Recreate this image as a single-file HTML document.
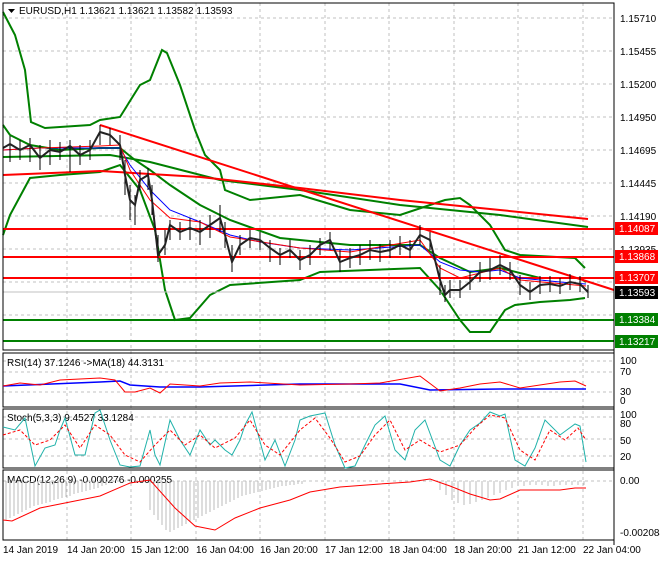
<!DOCTYPE html>
<html><head><meta charset="utf-8"><style>
body{margin:0;background:#fff;width:660px;height:560px;overflow:hidden;font-family:"Liberation Sans",sans-serif}
svg text{font-family:"Liberation Sans",sans-serif;font-size:10px}
</style></head><body>
<svg width="660" height="560" viewBox="0 0 660 560" xmlns="http://www.w3.org/2000/svg">
<rect width="660" height="560" fill="#fff"/>
<g stroke="#c0c0c0" stroke-dasharray="3,3" stroke-width="1">
<line x1="67" y1="3" x2="67" y2="540"/><line x1="131" y1="3" x2="131" y2="540"/><line x1="196" y1="3" x2="196" y2="540"/><line x1="260" y1="3" x2="260" y2="540"/><line x1="325" y1="3" x2="325" y2="540"/><line x1="389" y1="3" x2="389" y2="540"/><line x1="454" y1="3" x2="454" y2="540"/><line x1="518" y1="3" x2="518" y2="540"/><line x1="583" y1="3" x2="583" y2="540"/>
<line x1="3" y1="18" x2="614" y2="18"/><line x1="3" y1="51" x2="614" y2="51"/><line x1="3" y1="84" x2="614" y2="84"/><line x1="3" y1="117" x2="614" y2="117"/><line x1="3" y1="150" x2="614" y2="150"/><line x1="3" y1="183" x2="614" y2="183"/><line x1="3" y1="216" x2="614" y2="216"/><line x1="3" y1="249" x2="614" y2="249"/><line x1="3" y1="282" x2="614" y2="282"/><line x1="3" y1="315" x2="614" y2="315"/>
<line x1="3" y1="361" x2="614" y2="361"/><line x1="3" y1="372" x2="614" y2="372"/><line x1="3" y1="392" x2="614" y2="392"/>
<line x1="3" y1="417" x2="614" y2="417"/><line x1="3" y1="439" x2="614" y2="439"/><line x1="3" y1="456" x2="614" y2="456"/>
<line x1="3" y1="481" x2="614" y2="481"/>
</g>
<g fill="none" stroke-width="2">
<polyline stroke="#008000" points="3,12 15,35 25,70 31,122 45,128 90,125 100,120 120,117 140,85 150,80 162,50 167,53 180,85 195,130 205,155 220,170 225,190 250,200 300,195 350,210 400,215 430,205 445,200 460,198 470,205 490,225 505,250 520,255 575,258 585,268"/>
<polyline stroke="#008000" points="3,125 10,135 30,145 60,150 100,148 120,148 135,160 150,170 170,185 200,205 230,220 280,238 350,245 420,245 440,258 470,272 500,268 540,278 580,278 586,282"/>
<polyline stroke="#008000" points="3,235 10,215 30,178 60,175 100,172 120,165 140,190 155,230 165,290 175,320 190,318 210,295 230,285 300,280 320,272 420,268 440,290 460,320 470,332 490,332 505,310 515,305 540,302 570,300 585,298"/>
<polyline stroke="#008000" points="3,157 110,155 150,162 220,180 300,190 400,205 500,215 588,227"/>
<polyline stroke="#ff0000" points="3,175 100,171 200,177 300,188 400,200 500,210 588,219"/>
<line stroke="#ff0000" x1="100" y1="125" x2="614" y2="290"/>
<line stroke="#ff0000" x1="3" y1="229" x2="614" y2="229"/>
<line stroke="#ff0000" x1="3" y1="257" x2="614" y2="257"/>
<line stroke="#ff0000" x1="3" y1="278" x2="614" y2="278"/>
<line stroke="#008000" x1="3" y1="320" x2="614" y2="320"/>
<line stroke="#008000" x1="3" y1="341" x2="614" y2="341"/>
</g>
<line stroke="#c0c0c0" x1="3" y1="292" x2="614" y2="292"/>
<polyline fill="none" stroke="#0000ff" stroke-width="1" points="3,150 40,148 100,148 120,148 130,165 150,190 170,210 200,222 230,235 260,242 300,248 350,250 420,245 440,262 460,270 480,272 500,270 520,278 560,282 586,284"/>
<polyline fill="none" stroke="#ff0000" stroke-width="1" points="3,150 40,148 100,146 120,145 130,170 150,200 170,218 200,222 230,237 300,248 350,252 420,240 440,268 460,278 500,268 520,280 586,286"/>
<g stroke="#000" stroke-width="1">
<path d="M10 136V162M20 140V160M30 138V162M40 145V170M50 140V165M60 142V160M70 140V172M80 145V165M90 140V160M100 125V145M110 128V145M120 135V160M125 160V195M130 185V220M135 195V225M140 170V190M148 168V190M152 185V215M158 235V262M165 230V255M170 220V240M180 222V240M190 218V240M200 220V245M210 215V238M220 205V232M225 222V248M232 245V272M240 235V255M250 230V248M260 232V250M270 240V262M280 248V265M290 240V258M300 250V270M310 245V265M320 238V255M330 232V250M340 250V272M350 248V268M360 245V265M370 240V260M380 244V262M390 240V258M400 236V255M410 240V258M420 225V245M430 232V250M440 265V295M445 285V302M450 280V298M460 280V298M470 272V290M480 262V282M490 258V280M500 255V275M510 262V280M520 275V295M530 282V300M540 276V294M550 276V292M560 278V294M570 274V290M580 276V292M588 285V298"/>
</g>
<polyline fill="none" stroke="#222" stroke-width="2" points="3,148 10,144 20,150 30,145 40,158 50,150 60,152 70,146 80,155 90,150 100,132 110,135 120,145 125,175 130,200 135,205 140,180 148,175 152,200 158,255 165,245 170,225 180,232 190,228 200,232 210,225 220,218 225,235 232,262 240,245 250,238 260,240 270,248 280,255 290,250 300,260 310,255 320,245 330,240 340,262 350,258 360,255 370,250 380,252 390,250 400,245 410,250 420,235 430,240 440,280 445,295 450,290 460,290 470,282 480,272 490,270 500,265 510,270 520,285 530,292 540,285 550,284 560,286 570,282 580,284 588,292"/>
<line x1="614" y1="3" x2="614" y2="545" stroke="#000"/>
<rect x="3" y="3" width="611" height="347" fill="none" stroke="#000"/>
<rect x="3" y="353" width="611" height="54" fill="none" stroke="#000"/>
<rect x="3" y="409" width="611" height="59" fill="none" stroke="#000"/>
<rect x="3" y="470" width="611" height="70" fill="none" stroke="#000"/>
<path d="M8 9 L15 9 L11.5 13 Z" fill="#000"/>
<text x="19" y="14" fill="#000">EURUSD,H1  1.13621 1.13621 1.13582 1.13593</text>
<g fill="#000" font-size="9">
<text x="620" y="22">1.15710</text><text x="620" y="55">1.15455</text><text x="620" y="88">1.15200</text><text x="620" y="121">1.14950</text><text x="620" y="154">1.14695</text><text x="620" y="187">1.14445</text><text x="620" y="220">1.14190</text><text x="620" y="253">1.13935</text>
</g>
<rect x="615" y="222" width="43" height="13" fill="#ff0000"/><text x="619" y="232" fill="#fff">1.14087</text>
<rect x="615" y="250" width="43" height="13" fill="#ff0000"/><text x="619" y="260" fill="#fff">1.13868</text>
<rect x="615" y="271" width="43" height="13" fill="#ff0000"/><text x="619" y="281" fill="#fff">1.13707</text>
<rect x="615" y="286" width="43" height="13" fill="#000"/><text x="619" y="296" fill="#fff">1.13593</text>
<rect x="615" y="313" width="43" height="13" fill="#008000"/><text x="619" y="323" fill="#fff">1.13384</text>
<rect x="615" y="335" width="43" height="13" fill="#008000"/><text x="619" y="345" fill="#fff">1.13217</text>
<text x="7" y="366" fill="#000">RSI(14) 37.1246  -&gt;MA(18) 44.3131</text>
<polyline fill="none" stroke="#0000ff" stroke-width="1.5" points="3,386 100,382 120,381 130,385 160,387 200,387 300,384 400,384 430,390 500,389 586,389"/>
<polyline fill="none" stroke="#ff0000" points="3,386 20,383 40,385 60,380 80,379 100,378 115,380 125,392 135,392 150,388 160,393 170,384 200,386 220,383 250,382 300,385 350,384 380,383 420,376 440,391 460,388 480,384 500,382 520,388 560,382 575,381 586,386"/>
<g font-size="9" fill="#000"><text x="620" y="364">100</text><text x="620" y="375">70</text><text x="620" y="395">30</text><text x="620" y="404">0</text></g>
<text x="7" y="421" fill="#000">Stoch(5,3,3) 9.4527 33.1284</text>
<polyline fill="none" stroke="#20b2aa" points="3,427 15,430 25,418 35,466 45,448 55,445 60,430 65,418 75,455 85,455 95,413 100,410 110,440 120,465 130,467 140,466 150,430 155,455 160,465 170,420 180,440 190,455 200,430 210,445 215,440 225,450 232,455 240,440 245,425 252,412 265,460 275,440 285,466 295,440 300,420 310,416 320,414 325,413 335,445 345,468 355,466 365,445 375,425 385,416 395,450 405,460 415,430 425,420 440,460 450,466 460,445 470,430 480,423 490,412 500,416 505,414 515,460 525,466 535,448 545,420 560,435 575,424 580,426 586,462"/>
<polyline fill="none" stroke="#ff0000" stroke-dasharray="3,2" points="3,435 20,430 35,445 50,440 65,425 80,448 95,425 110,435 125,455 140,462 155,445 170,430 185,445 200,435 215,448 235,438 250,420 265,445 280,455 300,430 315,418 330,438 345,462 360,456 375,435 390,420 405,450 420,440 440,452 460,445 475,428 490,415 505,418 520,450 535,460 550,430 565,440 578,428 586,440"/>
<g font-size="9" fill="#000"><text x="620" y="418">100</text><text x="620" y="427">80</text><text x="620" y="444">50</text><text x="620" y="460">20</text></g>
<text x="7" y="483" fill="#000">MACD(12,26,9) -0.000276 -0.000255</text>
<g stroke="#bbb">
<path d="M6 481V520M10 481V518M14 481V516M18 481V514M22 481V512M26 481V510M30 481V508M34 481V506M38 481V505M42 481V504M46 481V503M50 481V502M54 481V500M58 481V499M62 481V498M66 481V497M70 481V496M74 481V494M78 481V493M82 481V492M86 481V491M90 481V490M94 481V489M98 481V488M102 481V486M106 481V485M110 481V483M114 481V482M150 481V510M154 481V515M158 481V520M162 481V525M166 481V530M170 481V532M174 481V530M178 481V528M182 481V526M186 481V524M190 481V522M194 481V520M198 481V518M202 481V516M206 481V514M210 481V512M214 481V510M218 481V508M222 481V506M226 481V504M230 481V502M234 481V500M238 481V498M242 481V496M246 481V495M250 481V494M254 481V493M258 481V492M262 481V491M266 481V490M270 481V489M274 481V488M278 481V487M282 481V486M286 481V486M290 481V485M294 481V485M298 481V484M302 481V484M440 481V490M446 481V495M452 481V500M458 481V503M464 481V505M470 481V504M476 481V502M482 481V500M488 481V498M494 481V495M500 481V493M506 481V490M512 481V488M518 481V486M524 481V486M530 481V485M536 481V485M542 481V485M548 481V486M554 481V486M560 481V485M566 481V485M572 481V485M578 481V485M584 481V485"/>
</g>
<polyline fill="none" stroke="#ff0000" points="3,520 12,521 40,508 70,502 100,496 130,483 150,480 175,508 195,526 215,530 235,518 260,508 290,500 310,492 340,487 380,484 410,482 430,479 450,486 470,494 490,500 500,499 520,490 540,490 560,490 575,488 586,488"/>
<g font-size="9" fill="#000"><text x="620" y="484">0.00</text><text x="620" y="536">-0.002084</text></g>
<g font-size="9" fill="#000">
<text x="3" y="553">14 Jan 2019</text><text x="67" y="553">14 Jan 20:00</text><text x="131" y="553">15 Jan 12:00</text><text x="196" y="553">16 Jan 04:00</text><text x="260" y="553">16 Jan 20:00</text><text x="325" y="553">17 Jan 12:00</text><text x="389" y="553">18 Jan 04:00</text><text x="454" y="553">18 Jan 20:00</text><text x="518" y="553">21 Jan 12:00</text><text x="583" y="553">22 Jan 04:00</text>
</g>
</svg>
</body></html>
